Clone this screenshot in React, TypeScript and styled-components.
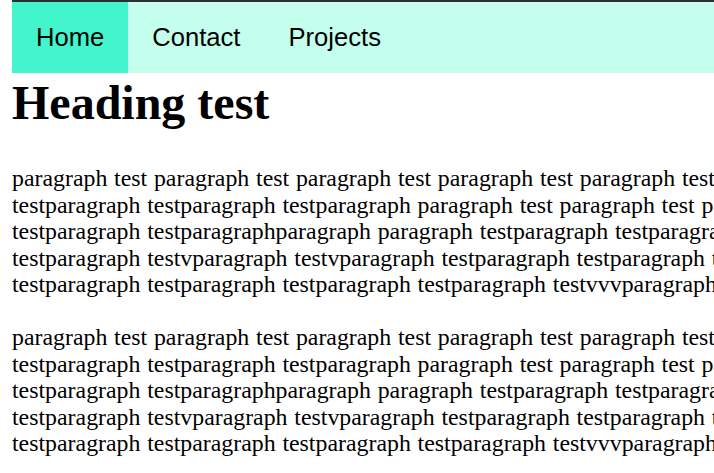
import React from "react";
import styled, { createGlobalStyle } from "styled-components";

const Global = createGlobalStyle`
  html, body { overflow: hidden; }
  body {
    margin: 0 0 0 12px;
    border-top: 2px solid #2c302e;
    font-family: "Liberation Serif", "Times New Roman", serif;
    background: #ffffff;
    color: #000000;
  }
`;

const Nav = styled.nav`
  display: flex;
  background: #c4ffee;
  width: 1200px;
`;

const NavLink = styled.a<{ $active?: boolean }>`
  display: block;
  padding: 21px 24px;
  font-family: "Liberation Sans", Arial, sans-serif;
  font-size: 25.6px;
  line-height: normal;
  color: #000;
  text-decoration: none;
  background: ${(p) => (p.$active ? "#43f5cc" : "transparent")};
`;

const Heading = styled.h1`
  font-size: 48px;
  font-weight: bold;
  margin: 2px 0 35px;
`;

const Paragraph = styled.p`
  font-size: 23.85px;
  line-height: 26.6px;
  word-spacing: 0.8px;
  white-space: pre;
  margin: 0 0 26px;
`;

const text = [
  "paragraph test paragraph test paragraph test paragraph test paragraph testparagraph test",
  "testparagraph testparagraph testparagraph paragraph test paragraph test paragraph test",
  "testparagraph testparagraphparagraph paragraph testparagraph testparagraph testparagraph",
  "testparagraph testvparagraph testvparagraph testparagraph testparagraph testparagraph",
  "testparagraph testparagraph testparagraph testparagraph testvvvparagraph testparagraph",
].join("\n");

export default function App() {
  return (
    <>
      <Global />
      <Nav>
        <NavLink href="#" $active>Home</NavLink>
        <NavLink href="#">Contact</NavLink>
        <NavLink href="#">Projects</NavLink>
      </Nav>
      <Heading>Heading test</Heading>
      <Paragraph>{text}</Paragraph>
      <Paragraph>{text}</Paragraph>
    </>
  );
}
